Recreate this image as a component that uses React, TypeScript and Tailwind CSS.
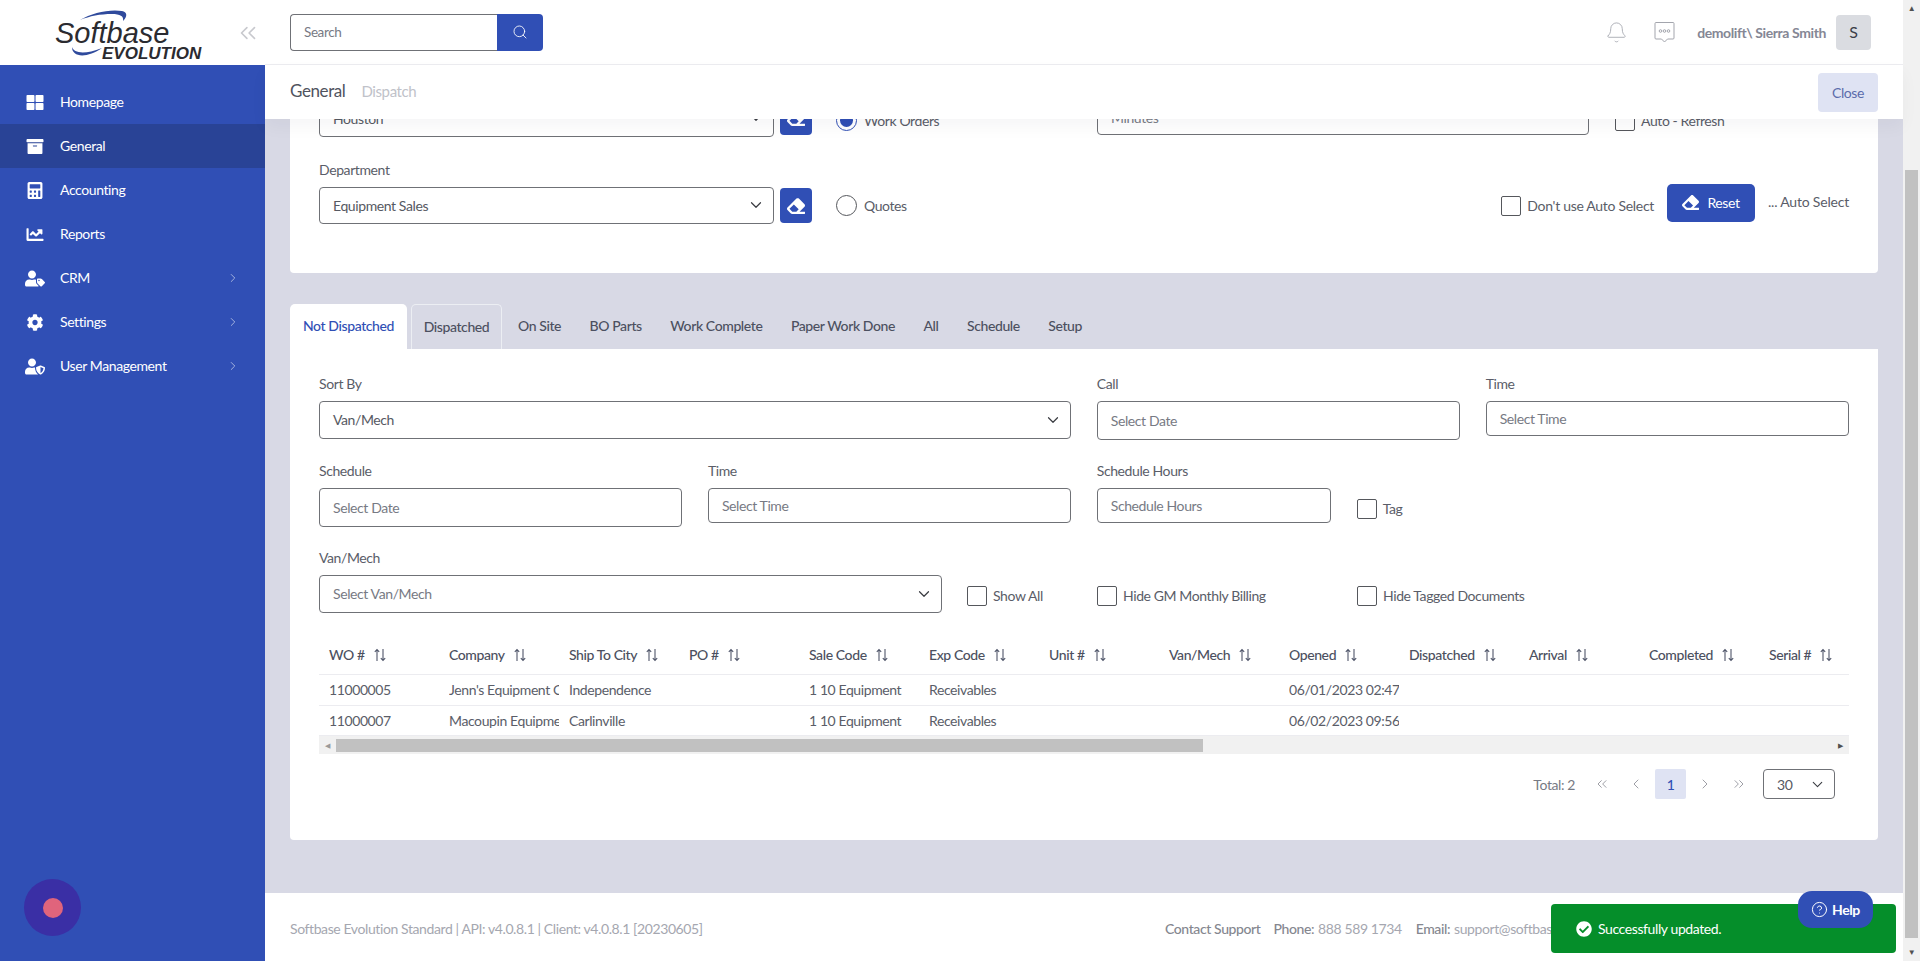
import { ReactNode } from 'react';
import { Search, ChevronsLeft, ChevronsRight, ChevronLeft, ChevronRight, ChevronDown, Bell, CircleHelp } from 'lucide-react';
import { FaThLarge, FaArchive, FaCalculator, FaChartLine, FaUserTag, FaCog, FaUserShield, FaEraser, FaCheckCircle } from 'react-icons/fa';

const navItems = [
  { name: 'Homepage', icon: FaThLarge },
  { name: 'General', icon: FaArchive, active: true },
  { name: 'Accounting', icon: FaCalculator },
  { name: 'Reports', icon: FaChartLine },
  { name: 'CRM', icon: FaUserTag, more: true },
  { name: 'Settings', icon: FaCog, more: true },
  { name: 'User Management', icon: FaUserShield, more: true },
];

const tabs = ['On Site', 'BO Parts', 'Work Complete', 'Paper Work Done', 'All', 'Schedule', 'Setup'];

const columns = ['WO #', 'Company', 'Ship To City', 'PO #', 'Sale Code', 'Exp Code', 'Unit #', 'Van/Mech', 'Opened', 'Dispatched', 'Arrival', 'Completed', 'Serial #'];

const rows = [
  ['11000005', "Jenn's Equipment Co", 'Independence', '', '1 10 Equipment', 'Receivables', '', '', '06/01/2023 02:47 PM', '', '', '', ''],
  ['11000007', 'Macoupin Equipment', 'Carlinville', '', '1 10 Equipment', 'Receivables', '', '', '06/02/2023 09:56 AM', '', '', '', ''],
];

const Logo = () => (
  <div className="relative w-[150px] h-[50px] text-[#2b2b30] tracking-normal font-['Liberation_Sans',sans-serif]">
    <svg className="absolute inset-0" width="150" height="50" viewBox="0 0 150 50" fill="none">
      <path d="M26 12 C38 5 55 1 68 3 C73 4 74 8 69 13 C70 8 66 6 58 6 C46 6 36 8 26 12 Z" fill="#2f4a9c" />
      <path d="M18 39 C20 45 30 47 48 40 C34 50 18 50 18 39 Z" fill="#2f4a9c" />
    </svg>
    <span className="absolute left-[1px] top-[8px] text-[29px] leading-[34px] italic">Softbase</span>
    <span className="absolute left-[48px] top-[36px] text-[17px] leading-[20px] italic font-bold">EVOLUTION</span>
  </div>
);

const SortIcon = () => (
  <svg width="14" height="14" viewBox="0 0 14 14" fill="none" stroke="#50566a" strokeWidth="1.1" className="shrink-0">
    <path d="M4 13V1.5M1.8 3.8 4 1.5 6.2 3.8M10 1v11.5M7.8 10.2 10 12.5l2.2-2.3" />
  </svg>
);

const Chat = () => (
  <svg width="21" height="23" viewBox="0 0 21 23" fill="none" stroke="#a3a5ad" strokeWidth="1">
    <path d="M2 1.5h17a1 1 0 0 1 1 1v14.5a1 1 0 0 1-1 1h-5.5l-3 3-3-3H2a1 1 0 0 1-1-1V2.5a1 1 0 0 1 1-1Z" />
    <circle cx="6.5" cy="10" r="1.3" />
    <circle cx="10.5" cy="10" r="1.3" />
    <circle cx="14.5" cy="10" r="1.3" />
  </svg>
);

const Label = ({ children }: { children: ReactNode }) => (
  <div className="h-5 mb-[7px] leading-5 text-[14px] text-[#5a5d68]">{children}</div>
);

const Select = ({ value, height = 'h-[38px]', muted }: { value: string; height?: string; muted?: boolean }) => (
  <div className={`${height} flex items-center justify-between pl-[13px] pr-2 pb-px border border-[#6f7176] rounded-[4px] bg-white text-[14px] ${muted ? 'text-[#777a84]' : 'text-[#565962]'}`}>
    <span>{value}</span>
    <ChevronDown size={18} strokeWidth={1.6} className="text-[#3a3c42]" />
  </div>
);

const Input = ({ value, height = 'h-[35px]', w = 'w-full' }: { value: string; height?: string; w?: string }) => (
  <div className={`${height} ${w} flex items-center pl-[13px] pb-px border border-[#6f7176] rounded-[4px] bg-white text-[14px] text-[#777a84]`}>{value}</div>
);

const Check = ({ label, className = '' }: { label: string; className?: string }) => (
  <div className={`flex items-center gap-[6px] text-[14px] text-[#5a5d68] ${className}`}>
    <span className="w-5 h-5 shrink-0 border border-[#55575c] rounded-[2px] bg-white" />
    <span className="whitespace-nowrap">{label}</span>
  </div>
);

const Radio = ({ label, checked }: { label: string; checked?: boolean }) => (
  <div className="flex items-center gap-[7px] text-[14px] text-[#5a5d68]">
    <span className={`w-[21px] h-[21px] rounded-full border flex items-center justify-center ${checked ? 'border-[#304fb5]' : 'border-[#55575c]'}`}>
      {checked && <span className="w-[13px] h-[13px] rounded-full bg-[#304fb5]" />}
    </span>
    {label}
  </div>
);

const EraseButton = () => (
  <div className="w-[32px] h-[35px] flex items-center justify-center rounded-[4px] bg-[#304fb5] text-white">
    <FaEraser size={18} />
  </div>
);

export default function App() {
  return (
    <div className="flex h-screen overflow-hidden bg-[#d8d9e5] tracking-[-0.4px] font-['Lato','Noto_Sans',sans-serif]">
      <aside className="relative w-[265px] shrink-0 flex flex-col bg-[#304fb5]">
        <div className="h-[65px] bg-white flex items-center pl-[54px] pr-[4px] justify-between">
          <Logo />
          <ChevronsLeft size={26} strokeWidth={1.5} className="text-[#c8c9ce]" />
        </div>
        <nav className="pt-[15px]">
          {navItems.map((item) => (
            <div key={item.name} className={`h-11 flex items-center pl-[25px] pr-[25px] text-[14px] text-white ${item.active ? 'bg-[#294396]' : ''}`}>
              <item.icon size={17} className="w-[20px] shrink-0" />
              <span className="ml-[15px] flex-1 pb-[2px]">{item.name}</span>
              {item.more && <ChevronRight size={14} strokeWidth={1.3} className="text-[#c6cfea]" />}
            </div>
          ))}
        </nav>
        <div className="absolute left-[24px] top-[879px] w-[57px] h-[57px] rounded-full bg-[#3a2fa5] flex items-center justify-center">
          <span className="w-5 h-5 rounded-full bg-[#e0647c]" />
        </div>
      </aside>

      <div className="flex-1 min-w-0 flex flex-col">
        <header className="h-[65px] shrink-0 bg-white border-b border-[#ececf0] flex items-center pl-[25px] pr-[32px]">
          <div className="flex h-[37px]">
            <div className="w-[207px] flex items-center pl-[13px] border border-[#6f7176] border-r-0 rounded-l-[4px] text-[13.5px] text-[#777a84]">Search</div>
            <div className="w-[46px] flex items-center justify-center bg-[#304fb5] rounded-r-[4px] text-white">
              <Search size={16} strokeWidth={1.3} />
            </div>
          </div>
          <div className="ml-auto flex items-center">
            <Bell size={23} strokeWidth={0.9} className="text-[#a3a5ad]" />
            <div className="ml-[26px]"><Chat /></div>
            <span className="ml-[22px] text-[14px] font-bold text-[#858795]">demolift\ Sierra Smith</span>
            <div className="ml-[10px] w-[35px] h-[35px] flex items-center justify-center rounded-[4px] bg-[#dadce1] text-[16px] text-[#3c3e48]">S</div>
          </div>
        </header>

        <div className="relative z-10 h-[54px] shrink-0 bg-white flex items-center pl-[25px] pr-[25px] shadow-[0_8px_16px_rgba(30,30,60,0.04)]">
          <span className="text-[17px] text-[#50535e] pb-[2px]">General</span>
          <span className="ml-4 text-[15px] text-[#c0c2c9] pb-[2px]">Dispatch</span>
          <div className="ml-auto w-[60px] h-[39px] flex items-center justify-center rounded-[4px] bg-[#dfe3f3] text-[14px] text-[#5b6cab]">Close</div>
        </div>

        <main className="flex-1 min-h-0 overflow-hidden px-[25px]">
          <div className="-mt-[40px]">
            <section className="h-[194px] bg-white rounded-[4px] px-[29px] pt-[21px]">
              <div className="flex h-[37px]">
                <div className="w-[455px]"><Select value="Houston" height="h-[37px]" /></div>
                <div className="ml-[6px]"><EraseButton /></div>
                <div className="ml-6 mt-[10px] w-[261px]"><Radio label="Work Orders" checked /></div>
                <div className="w-[492px] h-[35px] flex items-center pl-[13px] border border-[#6f7176] rounded-[4px] text-[14px] text-[#777a84]">Minutes</div>
                <Check label="Auto - Refresh" className="ml-[26px] mt-[10px] self-start" />
              </div>
              <div className="mt-[23px] h-5 leading-5 text-[14px] text-[#5a5d68]">Department</div>
              <div className="mt-[7px] flex items-center">
                <div className="w-[455px]"><Select value="Equipment Sales" height="h-[37px]" /></div>
                <div className="ml-[6px]"><EraseButton /></div>
                <div className="ml-6"><Radio label="Quotes" /></div>
                <div className="ml-auto flex items-center">
                  <Check label="Don't use Auto Select" className="tracking-[-0.3px]" />
                  <div className="ml-[13px] w-[88px] h-[38px] -mt-[6px] pb-px flex items-center justify-center gap-2 rounded-[5px] bg-[#304fb5] text-[14px] text-white">
                    <FaEraser size={17} />
                    Reset
                  </div>
                  <span className="ml-[13px] -mt-[8px] text-[14px] tracking-[-0.2px] text-[#5a5d68]">... Auto Select</span>
                </div>
              </div>
            </section>

            <div className="mt-[31px] h-[45px] flex items-stretch text-[14px] font-medium text-[#4c5060]">
              <div className="w-[117px] pb-[2px] flex items-center justify-center rounded-t-[5px] bg-white text-[#304fb5]">Not Dispatched</div>
              <div className="ml-1 w-[91px] pb-[2px] flex items-center justify-center rounded-t-[5px] border border-b-0 border-[#eceef3]">Dispatched</div>
              <div className="ml-4 pb-[2px] flex items-center gap-[28.5px]">
                {tabs.map((t) => <span key={t}>{t}</span>)}
              </div>
            </div>

            <section className="h-[491px] bg-white rounded-b-[4px] px-[29px] pt-[25px]">
              <div className="grid grid-cols-4 gap-x-[25.5px] h-[87px] items-start">
                <div className="col-span-2"><Label>Sort By</Label><Select value="Van/Mech" /></div>
                <div><Label>Call</Label><Input value="Select Date" height="h-[39px]" /></div>
                <div><Label>Time</Label><Input value="Select Time" /></div>
              </div>
              <div className="grid grid-cols-4 gap-x-[25.5px] h-[87px] items-start">
                <div><Label>Schedule</Label><Input value="Select Date" height="h-[39px]" /></div>
                <div><Label>Time</Label><Input value="Select Time" /></div>
                <div className="col-span-2 flex items-start">
                  <div><Label>Schedule Hours</Label><Input value="Schedule Hours" w="w-[234px]" /></div>
                  <Check label="Tag" className="ml-[26px] mt-[37px]" />
                </div>
              </div>
              <div className="flex items-start h-[87px]">
                <div className="w-[623px]"><Label>Van/Mech</Label><Select value="Select Van/Mech" muted /></div>
                <div className="w-[130px] pl-[25px] mt-[37px]"><Check label="Show All" /></div>
                <div className="w-[260px] pl-[25px] mt-[37px]"><Check label="Hide GM Monthly Billing" /></div>
                <div className="pl-[25px] mt-[37px]"><Check label="Hide Tagged Documents" /></div>
              </div>

              <div className="overflow-hidden">
                <div className="flex h-[40px] w-[1560px] border-b border-[#ececf0] text-[14px] font-medium text-[#4c5060]">
                  {columns.map((c) => (
                    <div key={c} className="w-[120px] shrink-0 pl-[10px] flex items-center gap-2">
                      {c}
                      <SortIcon />
                    </div>
                  ))}
                </div>
                {rows.map((row) => (
                  <div key={row[0]} className="flex h-[30.5px] w-[1560px] border-b border-[#ececf0] text-[14px] text-[#5a5d68]">
                    {row.map((cell, i) => (
                      <div key={i} className="w-[120px] shrink-0 pl-[10px] flex items-center">
                        <div className="w-[110px] overflow-hidden whitespace-nowrap">{cell}</div>
                      </div>
                    ))}
                  </div>
                ))}
                <div className="h-[18px] flex items-center bg-[#f1f1f1]">
                  <span className="w-[17px] text-center text-[7px] text-[#9a9a9a]">◀</span>
                  <div className="w-[867px] h-[13px] bg-[#c1c1c1]" />
                  <span className="ml-auto w-[17px] text-center text-[7px] text-[#505050]">▶</span>
                </div>
              </div>

              <div className="mt-[15px] flex items-center justify-end pr-[14px] text-[14px] text-[#777a84]">
                <span>Total: 2</span>
                <ChevronsLeft size={16} strokeWidth={1.2} className="ml-[19px] text-[#85878f]" />
                <ChevronLeft size={16} strokeWidth={1.2} className="ml-[18px] text-[#85878f]" />
                <span className="ml-[11px] w-[31px] h-[30px] flex items-center justify-center rounded-[2px] bg-[#dfe3f3] font-medium text-[#304fb5]">1</span>
                <ChevronRight size={16} strokeWidth={1.2} className="ml-[11px] text-[#85878f]" />
                <ChevronsRight size={16} strokeWidth={1.2} className="ml-[18px] text-[#85878f]" />
                <div className="ml-[16px] w-[72px] h-[30px] flex items-center justify-between pl-[13px] pr-[8px] border border-[#6f7176] rounded-[4px] text-[#565962]">
                  30
                  <ChevronDown size={17} strokeWidth={1.5} className="text-[#3a3c42]" />
                </div>
              </div>
            </section>
          </div>
        </main>

        <footer className="h-[68px] shrink-0 bg-white flex items-center px-[25px] pt-[2px] text-[14px] text-[#a5a7b0]">
          <span>Softbase Evolution Standard | API: v4.0.8.1 | Client: v4.0.8.1 [20230605]</span>
          <div className="ml-auto w-[713px] flex items-center whitespace-nowrap overflow-hidden">
            <span className="font-medium text-[#85878f]">Contact Support</span>
            <span className="ml-[13px] font-medium text-[#85878f]">Phone:</span>
            <span className="ml-1">888 589 1734</span>
            <span className="ml-[14px] font-medium text-[#85878f]">Email:</span>
            <span className="ml-1">support@softbase.com</span>
          </div>
        </footer>
      </div>

      <div className="w-[17px] shrink-0 flex flex-col items-center bg-[#f1f1f1] text-[8px] leading-[17px]">
        <span className="h-[17px] text-[#505050]">▲</span>
        <div className="mt-[153px] w-[13px] h-[768px] bg-[#c1c1c1]" />
        <span className="mt-auto h-[17px] text-[#505050]">▼</span>
      </div>

      <div className="absolute left-[1551px] top-[904px] w-[345px] h-[49px] flex items-center pl-[25px] rounded-[4px] bg-[#058e2a] text-[14px] text-white">
        <FaCheckCircle size={16} />
        <span className="ml-[6px]">Successfully updated.</span>
      </div>
      <div className="absolute left-[1798px] top-[891px] w-[75px] h-[37px] flex items-center justify-center gap-1 rounded-[14px] bg-[#304fb5] text-[14px] font-bold text-white">
        <CircleHelp size={17} strokeWidth={1.4} />
        Help
      </div>
    </div>
  );
}
